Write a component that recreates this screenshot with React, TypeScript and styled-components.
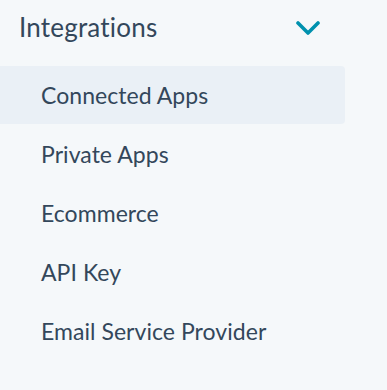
import styled, { createGlobalStyle } from "styled-components";

const GlobalStyle = createGlobalStyle`
  html, body {
    margin: 0;
    padding: 0;
    background: #f5f8fa;
  }
  body {
    font-family: Lato, "Open Sans", sans-serif;
    -webkit-font-smoothing: antialiased;
  }
`;

const Sidebar = styled.nav`
  width: 387px;
  height: 390px;
  background: #f5f8fa;
  color: #33475b;
`;

const Header = styled.button`
  display: flex;
  align-items: center;
  justify-content: space-between;
  width: 345px;
  height: 54px;
  padding: 0 25px 0 19px;
  box-sizing: border-box;
  border: 0;
  background: transparent;
  color: inherit;
  font-family: inherit;
  font-size: 26px;
  font-weight: 400;
  letter-spacing: 0.2px;
  cursor: pointer;
`;

const Chevron = styled.svg`
  width: 24px;
  height: 14px;
  flex-shrink: 0;
  margin-top: 2px;
`;

const List = styled.ul`
  list-style: none;
  margin: 12px 0 0 0;
  padding: 0;
  display: flex;
  flex-direction: column;
  gap: 1px;
`;

const Item = styled.li<{ $active?: boolean }>`
  display: flex;
  align-items: center;
  width: 345px;
  height: 58px;
  padding-left: 41px;
  box-sizing: border-box;
  border-radius: 0 4px 4px 0;
  background: ${(p) => (p.$active ? "#eaf0f6" : "transparent")};
  font-size: 23px;
  letter-spacing: 0.05px;
  cursor: pointer;
`;

const links = [
  "Connected Apps",
  "Private Apps",
  "Ecommerce",
  "API Key",
  "Email Service Provider",
];

export default function App() {
  return (
    <Sidebar>
      <GlobalStyle />
      <Header>
        Integrations
        <Chevron viewBox="0 0 24 14" fill="none">
          <path
            d="M2 2 L12 12 L22 2"
            stroke="#0091ae"
            strokeWidth="3.6"
            strokeLinecap="round"
            strokeLinejoin="round"
          />
        </Chevron>
      </Header>
      <List>
        {links.map((label, i) => (
          <Item key={label} $active={i === 0}>
            {label}
          </Item>
        ))}
      </List>
    </Sidebar>
  );
}
